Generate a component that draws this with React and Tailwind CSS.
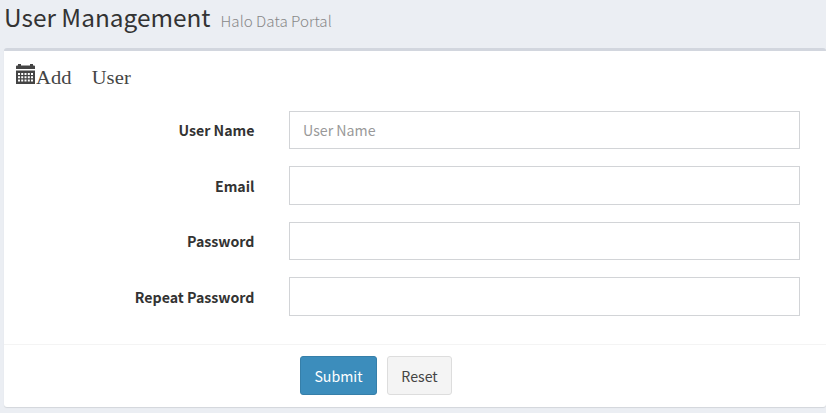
const fields = [
  { label: "User Name", type: "text", placeholder: "User Name", size: "h-[38px] mb-[17px]" },
  { label: "Email", type: "email", placeholder: "", size: "h-[39px] mb-[17px]" },
  { label: "Password", type: "password", placeholder: "", size: "h-[38px] mb-[17px]" },
  { label: "Repeat Password", type: "password", placeholder: "", size: "h-[39px]" },
];

function CalendarIcon() {
  return (
    <svg className="mt-[13px] h-5 w-[19px] shrink-0" viewBox="0 0 19 20" fill="#444">
      <path d="M0 2.500Q0 1.500 1 1.500h1V0h3v1.500h9V0h3v1.500h1q1 0 1 1V5H0z" />
      <path
        fillRule="evenodd"
        d="M0 6.500h19V20H0zM2 9v2h2V9zM5.200 9v2h2V9zM8.500 9v2h2V9zM11.800 9v2h2V9zM15 9v2h2V9zM2 12.200v2h2v-2zM5.200 12.200v2h2v-2zM8.500 12.200v2h2v-2zM11.800 12.200v2h2v-2zM15 12.200v2h2v-2zM2 15.500v2h2v-2zM5.200 15.500v2h2v-2zM8.500 15.500v2h2v-2zM11.800 15.500v2h2v-2zM15 15.500v2h2v-2z"
      />
    </svg>
  );
}

export default function App() {
  return (
    <div className="h-[413px] w-[826px] overflow-hidden bg-[#ebeef3] font-['Noto_Sans_CJK_SC',sans-serif] text-[14.2px] text-[#333]">
      <header className="flex h-12 items-baseline pl-1">
        <h1 className="text-[24.4px] leading-[34px] whitespace-nowrap">User Management</h1>
        <small className="ml-[10px] font-['Noto_Sans_CJK_SC_Light','Noto_Sans_CJK_SC',sans-serif] text-[15.2px] leading-5 font-light whitespace-nowrap text-[#888]">
          Halo Data Portal
        </small>
      </header>
      <main className="ml-1 h-[359px] rounded-[3px] border-t-3 border-[#d2d6de] bg-white shadow-[0_1px_1px_rgba(0,0,0,0.1)]">
        <div className="flex h-[60px] pl-3 text-[#444]">
          <CalendarIcon />
          <h3 className="mt-[15px] ml-px origin-left scale-x-[1.08] font-['Liberation_Serif',serif] text-[19px] leading-6 tracking-[0.1px] whitespace-nowrap">
            Add<span className="ml-[18.5px]">User</span>
          </h3>
        </div>
        <form>
          <div className="h-[233px]">
            {fields.map((field) => (
              <label key={field.label} className={`flex items-center ${field.size}`}>
                <span className="w-[250.500px] text-right leading-5 font-bold">{field.label}</span>
                <input
                  type={field.type}
                  placeholder={field.placeholder}
                  className="ml-[34.500px] h-full w-[511px] border border-[#d2d4d7] bg-white px-[13px] placeholder:text-[#999]"
                />
              </label>
            ))}
          </div>
          <div className="flex gap-[10px] border-t border-[#f4f4f4] pt-[11px] pl-[296px]">
            <button type="submit" className="h-[39px] w-[77px] rounded-[3px] border border-[#367fa9] bg-[#3c8dbc] pt-[2px] text-white">
              Submit
            </button>
            <button type="reset" className="h-[39px] w-[65px] rounded-[3px] border border-[#ddd] bg-[#f4f4f4] pt-[2px] text-[#444]">
              Reset
            </button>
          </div>
        </form>
      </main>
    </div>
  );
}
